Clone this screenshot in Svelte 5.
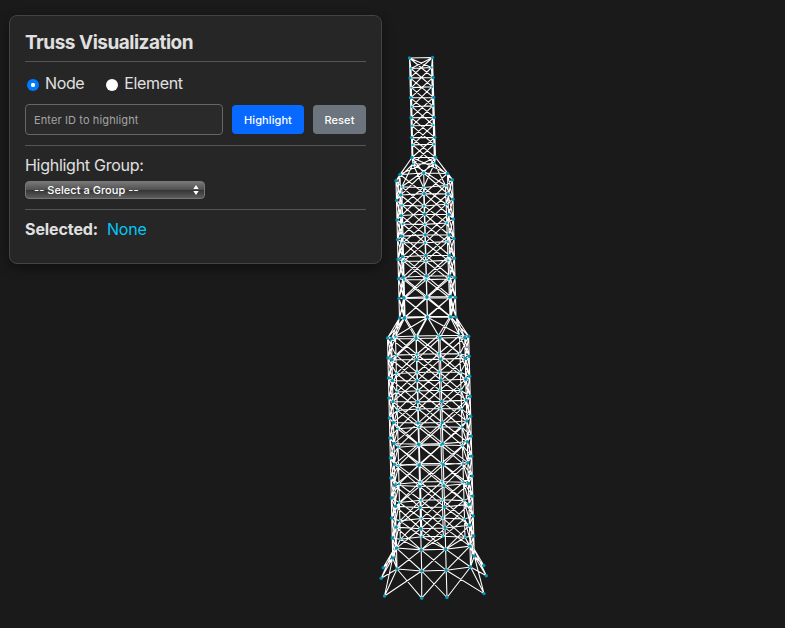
<script>
  let mode = $state('node');
  let query = $state('');
  let selected = $state('None');

  // A column of joints, evenly spaced from (x0, y0) to (x1, y1).
  const column = (x0, y0, x1, y1, n) =>
    Array.from({ length: n }, (_, i) => [
      x0 + ((x1 - x0) * i) / (n - 1),
      y0 + ((y1 - y0) * i) / (n - 1)
    ]);

  // Each section lists its columns in order round the tower.
  const mast = [
    column(409.5, 58, 412, 157.5, 6),
    column(432.5, 57.5, 435.5, 157.3, 6),
    column(431.5, 67.5, 434.5, 163.5, 6),
    column(411, 68.5, 413, 164, 6)
  ];
  const middle = [
    column(396, 180.8, 399.5, 318, 8),
    column(400, 174.5, 404.3, 318.3, 8),
    column(423.7, 173, 427.5, 317.3, 8),
    column(447.5, 173.5, 451, 317, 8),
    column(452.5, 179.7, 456, 317, 8),
    column(445.5, 185.5, 450, 316.5, 8),
    column(423.5, 187.5, 427.3, 316.5, 8),
    column(401.8, 186.8, 405, 317, 8)
  ];
  const lower = [
    column(387.5, 338, 392.7, 558, 12),
    column(391.5, 338.8, 397, 569, 12),
    column(416, 338.5, 421.7, 571, 12),
    column(440, 338, 446.2, 570.3, 12),
    column(464.7, 337.5, 470.5, 567, 12),
    column(468.7, 336.3, 474.3, 556, 12),
    column(459.5, 335.5, 465, 537.3, 12),
    column(438.5, 335.5, 443.3, 536.3, 12),
    column(416.2, 336, 422, 536.7, 12),
    column(395.5, 336.7, 400.3, 539.3, 12)
  ];

  const edges = [];
  const link = (a, b) => edges.push([a, b]);

  function brace(cols) {
    const rows = cols[0].length;
    cols.forEach((col, c) => {
      const next = cols[(c + 1) % cols.length];
      for (let r = 0; r < rows; r++) {
        link(col[r], next[r]);
        if (r + 1 < rows) {
          link(col[r], col[r + 1]);
          link(col[r], next[r + 1]);
          link(next[r], col[r + 1]);
        }
      }
    });
  }
  [mast, middle, lower].forEach(brace);
  link(mast[0][0], mast[2][0]);
  link(mast[1][0], mast[3][0]);

  const base = (cols) => cols.map((c) => c[c.length - 1]);
  const head = (cols) => cols.map((c) => c[0]);
  const join = (from, to, pairs) => pairs.forEach(([a, b]) => link(from[a], to[b]));

  join(base(mast), head(middle), [
    [0, 0], [0, 1], [0, 2], [0, 3], [1, 1], [1, 2], [1, 3], [1, 4],
    [2, 4], [2, 5], [2, 6], [2, 7], [3, 0], [3, 5], [3, 6], [3, 7]
  ]);
  join(base(middle), head(lower), [
    [0, 0], [0, 1], [0, 9], [1, 0], [1, 1], [1, 2], [2, 1], [2, 2], [2, 3], [2, 4],
    [3, 3], [3, 4], [3, 5], [4, 4], [4, 5], [4, 6], [5, 5], [5, 6], [5, 7],
    [6, 7], [6, 8], [7, 0], [7, 8], [7, 9]
  ]);

  // Lower bays reach back to the rear ring just above the feet.
  link(lower[1][10], lower[9][11]);
  link(lower[2][10], lower[9][11]);
  link(lower[2][10], lower[7][11]);
  link(lower[3][10], lower[8][11]);
  link(lower[3][10], lower[6][11]);
  link(lower[4][10], lower[6][11]);

  const feet = [
    [384.5, 596], [421.7, 598.2], [447, 597.5], [484, 593.6],
    [381.2, 578.3], [383.2, 567.8], [486.3, 575.8], [483.8, 565.5]
  ];
  join(base(lower), feet, [
    [1, 0], [1, 1], [2, 0], [2, 1], [2, 2], [3, 1], [3, 2], [3, 3], [4, 2], [4, 3],
    [0, 4], [0, 5], [0, 0], [1, 4], [5, 6], [5, 7], [5, 3], [4, 6]
  ]);
  const shoulderL = [393.5, 550];
  const shoulderR = [473.5, 548];
  link(shoulderL, feet[5]);
  link(shoulderL, feet[4]);
  link(shoulderR, feet[7]);
  link(shoulderR, feet[6]);

  const front = [
    ...mast.slice(0, 2), ...middle.slice(0, 5), ...lower.slice(0, 6), feet
  ].flat();
  const rear = [...mast.slice(2), ...middle.slice(5), ...lower.slice(6)].flat();
  const path = edges.map(([a, b]) => `M${a[0]} ${a[1]}L${b[0]} ${b[1]}`).join('');

  function highlight() {
    selected = query.trim() || 'None';
  }
  function reset() {
    query = '';
    selected = 'None';
  }
</script>

<main>
  <svg class="scene" width="785" height="628" viewBox="0 0 785 628">
    <path d={path} class="member" />
    {#each rear as [x, y]}
      <circle cx={x} cy={y} r="1.2" class="joint rear" />
    {/each}
    {#each front as [x, y]}
      <circle cx={x} cy={y} r="1.7" class="joint" />
    {/each}
  </svg>

  <section class="panel">
    <h1>Truss Visualization</h1>
    <div class="modes">
      <label><input type="radio" value="node" bind:group={mode} /><span>Node</span></label>
      <label><input type="radio" value="element" bind:group={mode} /><span>Element</span></label>
    </div>
    <div class="search">
      <input type="text" placeholder="Enter ID to highlight" bind:value={query} />
      <button class="primary" onclick={highlight}>Highlight</button>
      <button class="secondary" onclick={reset}>Reset</button>
    </div>
    <div class="group">
      <div class="caption">Highlight Group:</div>
      <button class="select">
        <span>-- Select a Group --</span>
        <svg width="6" height="10" viewBox="0 0 6 10"><path d="M3 0L5.7 4H.3zM3 10L.3 6h5.4z" fill="#fff" /></svg>
      </button>
    </div>
    <div class="selected"><strong>Selected:</strong><span>{selected}</span></div>
  </section>
</main>

<style>
  :global(body) {
    margin: 0;
    background: #1a1a1a;
  }
  main {
    position: relative;
    width: 785px;
    height: 628px;
    overflow: hidden;
    background: #1a1a1a;
    color: #e0e0e0;
    font: 16px/20px Inter, 'Liberation Sans', sans-serif;
  }
  .scene {
    position: absolute;
    inset: 0;
  }
  .member {
    fill: none;
    stroke: #fff;
    stroke-width: 1.08;
  }
  .joint {
    fill: #0097b8;
  }
  .rear {
    fill: #00b5d8;
  }
  .panel {
    position: absolute;
    left: 9px;
    top: 15px;
    box-sizing: border-box;
    width: 373px;
    height: 249px;
    padding: 15px;
    border: 1px solid #444;
    border-radius: 8px;
    background: #262626;
    box-shadow: 0 4px 12px rgba(0, 0, 0, 0.4);
  }
  h1 {
    box-sizing: border-box;
    height: 31px;
    margin: 0;
    padding-top: 1px;
    border-bottom: 1px solid #555;
    font-size: 19px;
    line-height: 22px;
    font-weight: 700;
    letter-spacing: -0.5px;
  }
  .modes {
    display: flex;
    height: 42px;
    box-sizing: border-box;
    padding-top: 11px;
    gap: 20px;
  }
  label {
    display: flex;
    align-items: flex-start;
    letter-spacing: -0.36px;
  }
  input[type='radio'] {
    appearance: none;
    width: 12px;
    height: 12px;
    margin: 6px 6px 0 2px;
    border-radius: 50%;
    background: #fff;
  }
  input[type='radio']:checked {
    background: radial-gradient(circle, #fff 0 1.8px, #007aff 2.5px);
  }
  label + label input {
    margin-left: 0;
  }
  .search {
    display: flex;
    align-items: center;
    height: 31px;
  }
  .search input {
    box-sizing: border-box;
    width: 198px;
    height: 31px;
    margin: 0 9px 0 0;
    padding: 1px 8px 0;
    border: 1px solid #666;
    border-radius: 4px;
    background: #2a2a2a;
    color: #e0e0e0;
    font: 11px Inter, sans-serif;
    letter-spacing: 0.12px;
  }
  .search input::placeholder {
    color: #a4a4a4;
    opacity: 1;
  }
  .search button {
    height: 29px;
    padding: 1px 0 0;
    border: 0;
    border-radius: 4px;
    color: #fff;
    font: 500 11px Inter, sans-serif;
    letter-spacing: 0.08px;
  }
  .search .primary {
    width: 72px;
    margin-right: 9px;
    background: #0769ff;
  }
  .search .secondary {
    width: 53px;
    background: #6c757d;
  }
  .group {
    box-sizing: border-box;
    height: 65px;
    margin-top: 10px;
    padding-top: 9px;
    border: 1px solid #555;
    border-width: 1px 0;
  }
  .caption {
    height: 26px;
    letter-spacing: -0.28px;
  }
  .select {
    display: flex;
    box-sizing: border-box;
    align-items: center;
    justify-content: space-between;
    width: 180px;
    height: 18px;
    padding: 0 5px 0 8px;
    border: 1px solid #777;
    border-radius: 4px;
    background: linear-gradient(#777 0, #505050 48%, #343434 50%, #5c5c5c 100%);
    color: #fff;
    font: 500 11px Inter, sans-serif;
    letter-spacing: 0.05px;
  }
  .selected {
    display: flex;
    gap: 9px;
    padding-top: 9px;
  }
  .selected strong {
    font-weight: 700;
    letter-spacing: -0.1px;
  }
  .selected span {
    color: #00c8f8;
    letter-spacing: -0.25px;
  }
</style>
